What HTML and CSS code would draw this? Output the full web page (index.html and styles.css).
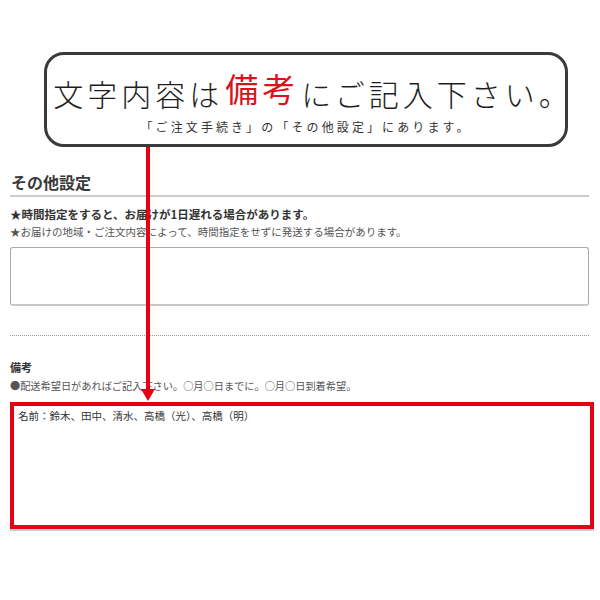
FILE: index.html
```html
<!DOCTYPE html>
<html lang="ja">
<head>
<meta charset="utf-8">
<title>その他設定</title>
<link rel="stylesheet" href="styles.css">
</head>
<body>
<div class="page">
  <div class="callout">
    <p class="callout-main">文字内容は<span class="hl">備考</span>にご記入下さい。</p>
    <p class="callout-sub">「ご注文手続き」の「その他設定」にあります。</p>
  </div>

  <section class="form">
    <h2 class="form-title">その他設定</h2>
    <p class="note-strong">★時間指定をすると、お届けが1日遅れる場合があります。</p>
    <p class="note">★お届けの地域・ご注文内容によって、時間指定をせずに発送する場合があります。</p>
    <div class="field field-plain"></div>

    <hr class="divider">

    <h3 class="label">備考</h3>
    <p class="note note-tight">●配送希望日があればご記入下さい。○月○日までに。○月○日到着希望。</p>
    <div class="field field-marked">名前：鈴木、田中、清水、高橋（光）、高橋（明）</div>
  </section>

  <svg class="arrow" width="16" height="256" viewBox="0 0 16 256" aria-hidden="true">
    <rect x="6" y="0" width="4" height="246" fill="#e60012"/>
    <polygon points="1,242 15,242 8,254" fill="#e60012"/>
  </svg>
</div>
</body>
</html>
```

FILE: styles.css
```css
* {
  box-sizing: border-box;
}

html, body {
  margin: 0;
  padding: 0;
  background: #fff;
}

body {
  font-family: "Noto Sans CJK JP", "Noto Sans", sans-serif;
  color: #333;
}

.page {
  position: relative;
  width: 600px;
  height: 600px;
  overflow: hidden;
}

/* speech-box at the top */
.callout {
  margin: 52px 0 0 44px;
  width: 524px;
  height: 95px;
  border: 3px solid #3a3a3a;
  border-radius: 20px;
  display: flex;
  flex-direction: column;
  align-items: center;
  padding-top: 17px;
}

.callout-main {
  margin: 0;
  font-size: 30px;
  line-height: 40px;
  letter-spacing: 4px;
  color: #1e1e1e;
  font-weight: 300;
  white-space: nowrap;
  padding-left: 14px;
}

.callout-main .hl {
  color: #d7141c;
  font-size: 33px;
  font-weight: 400;
  position: relative;
  top: -4px;
  margin: 0 2px;
}

.callout-sub {
  margin: 7px 0 0;
  font-size: 12px;
  line-height: 14px;
  letter-spacing: 3.1px;
  color: #333;
  white-space: nowrap;
  padding-left: 0;
}

/* form area */
.form {
  padding: 0 11px 0 10px;
  margin-top: 25px;
}

.form-title {
  margin: 0;
  font-size: 16px;
  line-height: 20px;
  font-weight: 700;
  color: #3a3a3a;
  padding: 0 0 3px 1px;
  border-bottom: 2px solid #ccc;
}

.note-strong {
  margin: 9px 0 0;
  font-size: 11.5px;
  line-height: 16px;
  font-weight: 700;
  color: #333;
  white-space: nowrap;
}

.note {
  margin: 2px 0 0;
  font-size: 10.5px;
  line-height: 16px;
  color: #555;
  white-space: nowrap;
}

.note-tight {
  margin-top: 3px;
  font-size: 10.2px;
}

.field {
  background: #fff;
}

.field-plain {
  margin-top: 7px;
  height: 59px;
  border: 1px solid #aaa;
  border-bottom: 2px solid #c8c8c8;
  border-radius: 3px;
}

.divider {
  margin: 29px 0 0;
  border: 0;
  border-top: 1px dotted #999;
  height: 0;
}

.label {
  margin: 23px 0 0;
  font-size: 11px;
  line-height: 16px;
  font-weight: 700;
  color: #333;
}

.field-marked {
  margin: 8px -5px 0 0;
  height: 127px;
  border: 4px solid #e60012;
  box-shadow: 0 2px 0 #ccc;
  padding: 3px 4px;
  font-size: 10.5px;
  line-height: 14px;
  color: #333;
}

/* pointer running from the box down to the remarks field */
.arrow {
  position: absolute;
  left: 140px;
  top: 147px;
}
```
